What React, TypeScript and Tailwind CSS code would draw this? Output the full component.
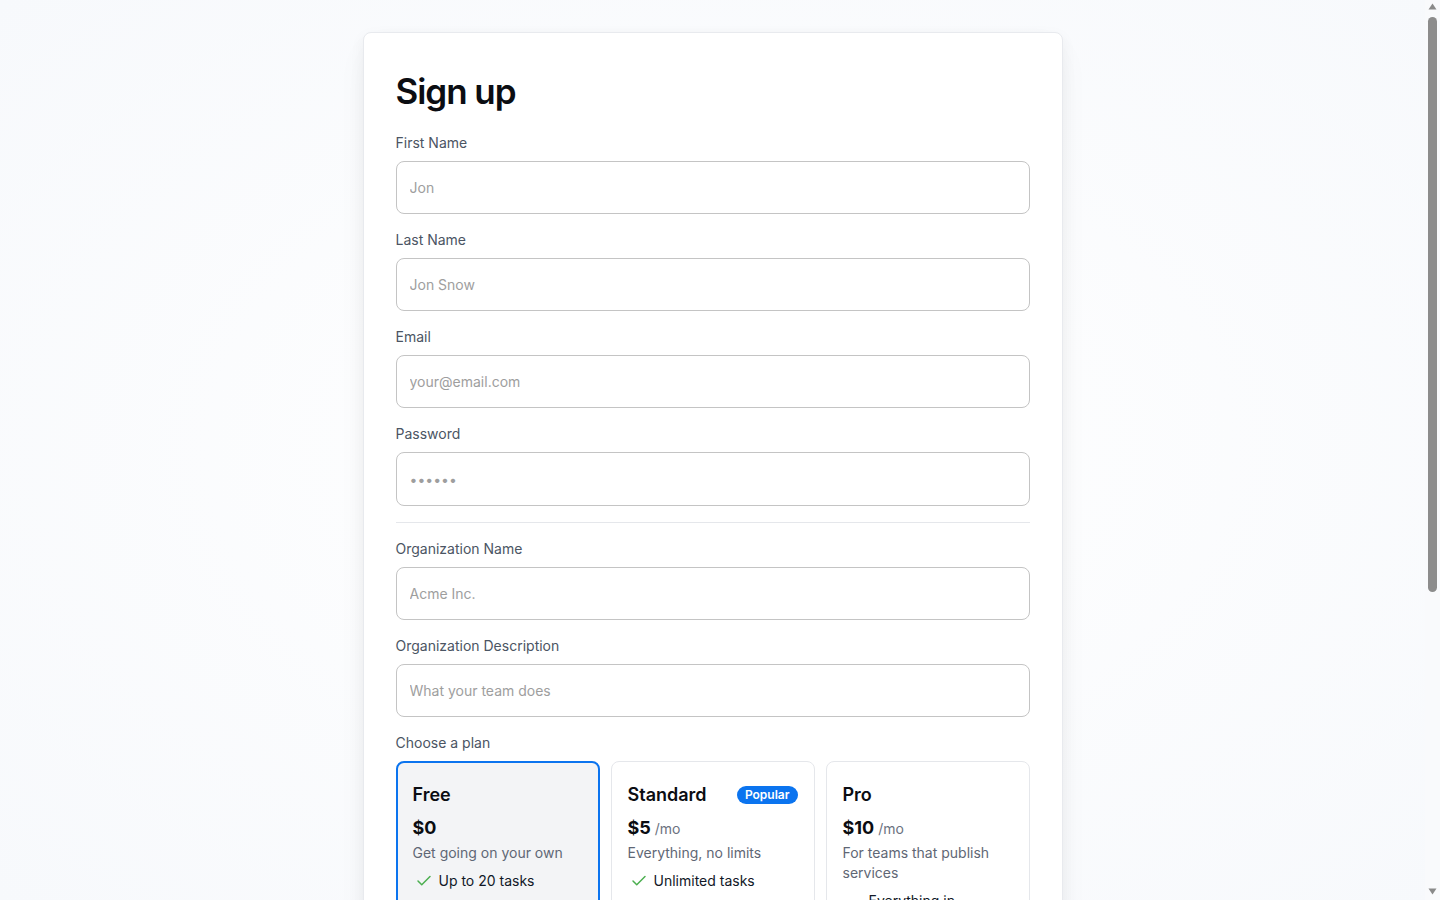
import React from "react";
import { Check, X } from "lucide-react";

type Plan = {
  name: string;
  price: string;
  per?: string;
  blurb: string;
  popular?: boolean;
  features: { label: string; included: boolean }[];
};

const plans: Plan[] = [
  {
    name: "Free",
    price: "$0",
    blurb: "Get going on your own",
    features: [
      { label: "Up to 20 tasks", included: true },
      { label: "Unlimited projects", included: false },
      { label: "Team collaboration", included: false },
    ],
  },
  {
    name: "Standard",
    price: "$5",
    per: "/mo",
    blurb: "Everything, no limits",
    popular: true,
    features: [
      { label: "Unlimited tasks", included: true },
      { label: "Custom domains", included: false },
      { label: "Priority support", included: false },
    ],
  },
  {
    name: "Pro",
    price: "$10",
    per: "/mo",
    blurb: "For teams that publish services",
    features: [
      { label: "Everything in Standard", included: true },
      { label: "Custom domains", included: true },
      { label: "Priority support", included: true },
    ],
  },
];

function Field({
  label,
  placeholder,
  type = "text",
  tall = false,
}: {
  label: string;
  placeholder: string;
  type?: string;
  tall?: boolean;
}) {
  return (
    <div className="flex flex-col gap-2">
      <label className="text-sm leading-5 text-[#4b5563]">{label}</label>
      <input
        type={type}
        placeholder={placeholder}
        className={
          (tall ? "h-[54px] " : "h-[53px] ") +
          "w-full rounded-lg border border-[#c4c4c4] bg-white px-[13px] text-sm text-[#111827] outline-none placeholder:text-[#9e9e9e]"
        }
      />
    </div>
  );
}

function PlanCard({ plan, selected }: { plan: Plan; selected: boolean }) {
  return (
    <div
      className={
        selected
          ? "flex flex-col rounded-lg border-2 border-[#0b74ef] bg-[#f3f4f6] px-[15px] pb-5 pt-[18px]"
          : "flex flex-col rounded-lg border border-[#e5e7eb] bg-white px-4 pb-5 pt-[19px]"
      }
    >
      <div className="flex h-7 items-center justify-between">
        <span className="text-lg font-semibold text-[#0b0d12]">{plan.name}</span>
        {plan.popular && (
          <span className="rounded-full bg-[#0b74ef] px-2 text-xs font-semibold leading-[18px] text-white">
            Popular
          </span>
        )}
      </div>
      <div className="mt-[5px] flex items-baseline gap-1">
        <span className="text-lg font-bold leading-7 text-[#0b0d12]">{plan.price}</span>
        {plan.per && <span className="text-sm text-[#6b7280]">{plan.per}</span>}
      </div>
      <p className="mt-[1px] text-sm leading-5 text-[#5f6775]">{plan.blurb}</p>
      <ul className="mt-2 flex flex-col gap-2">
        {plan.features.map((f) => (
          <li key={f.label} className="flex items-center gap-[6px] text-sm leading-5">
            {f.included ? (
              <Check className="ml-[2px] h-[18px] w-[18px] shrink-0 text-[#4caf50]" strokeWidth={2} />
            ) : (
              <X className="ml-[2px] h-[18px] w-[18px] shrink-0 text-[#b0b6bf]" strokeWidth={2} />
            )}
            <span className={f.included ? "text-[#111827]" : "text-[#9ca3af]"}>
              {f.label}
            </span>
          </li>
        ))}
      </ul>
    </div>
  );
}

// page scrollbar as it appears in the screenshot
function ScrollRail() {
  return (
    <div className="flex h-screen w-[15px] shrink-0 flex-col items-center justify-between bg-[#f9fafc] py-[3px]">
      <div className="flex flex-col items-center">
        <svg width="9" height="7" viewBox="0 0 9 7">
          <path d="M4.5 0.5L8.5 6.5H0.5Z" fill="#8a8a8a" />
        </svg>
        <div className="mt-[7px] h-[575px] w-[9px] rounded-full bg-[#8c8c8c]" />
      </div>
      <svg width="9" height="7" viewBox="0 0 9 7" className="mb-[2px]">
        <path d="M0.5 0.5H8.5L4.5 6.5Z" fill="#8a8a8a" />
      </svg>
    </div>
  );
}

export default function App() {
  return (
    <div
      className="flex h-screen bg-[radial-gradient(ellipse_at_50%_50%,#ffffff,#f7f9fc)]"
      style={{ fontFamily: "Inter, 'Noto Sans', sans-serif" }}
    >
      <div className="flex-1 overflow-y-auto [scrollbar-width:none]">
        <div className="py-8">
          <div className="mx-auto w-[700px] rounded-lg border border-[#e8eaee] bg-white p-8 shadow-[0_5px_15px_0_rgba(10,15,25,0.05),0_15px_35px_-5px_rgba(20,25,40,0.05)]">
            <h1 className="text-[35px] font-semibold leading-[52px] tracking-[-0.03em] text-[#0b0d12]">
              Sign up
            </h1>

            <form className="mt-4 flex flex-col gap-4" onSubmit={(e) => e.preventDefault()}>
              <Field label="First Name" placeholder="Jon" />
              <Field label="Last Name" placeholder="Jon Snow" />
              <Field label="Email" placeholder="your@email.com" type="email" />
              <Field label="Password" placeholder="••••••" type="password" tall />

              <hr className="border-[#e5e7eb]" />

              <Field label="Organization Name" placeholder="Acme Inc." />
              <Field label="Organization Description" placeholder="What your team does" />

              <div className="flex flex-col gap-2">
                <span className="text-sm leading-5 text-[#4b5563]">Choose a plan</span>
                <div className="grid grid-cols-3 gap-[11px]">
                  {plans.map((p, i) => (
                    <PlanCard key={p.name} plan={p} selected={i === 0} />
                  ))}
                </div>
              </div>

              <button
                type="submit"
                className="mt-2 h-10 w-full rounded-lg bg-[#111827] text-sm font-semibold text-white"
              >
                Sign up
              </button>
              <p className="text-center text-sm text-[#4b5563]">
                Already have an account?{" "}
                <a href="#" className="font-medium text-[#0b74ef] underline">
                  Sign in
                </a>
              </p>
            </form>
          </div>
        </div>
      </div>
      <ScrollRail />
    </div>
  );
}
